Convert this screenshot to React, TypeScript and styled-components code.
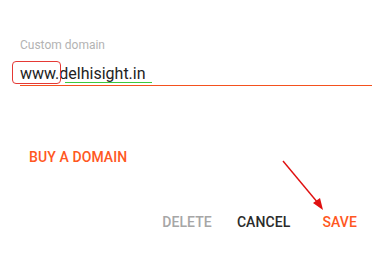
import React from "react";
import styled, { createGlobalStyle } from "styled-components";

const Global = createGlobalStyle`
  html, body { margin: 0; padding: 0; background: #ffffff; }
  body { font-family: Roboto, "Liberation Sans", sans-serif; }
`;

const Page = styled.div`
  position: relative;
  width: 392px;
  height: 255px;
  box-sizing: border-box;
  padding: 38px 20px 0 20px;
  display: flex;
  flex-direction: column;
`;

const Label = styled.div`
  font-size: 12px;
  line-height: 14px;
  color: #b3b3b3;
`;

const InputRow = styled.div`
  margin-top: 11px;
  height: 21px;
  display: flex;
  align-items: flex-end;
  border-bottom: 1px solid #f4511e;
  font-size: 16px;
  line-height: 20px;
  color: #222222;
  padding-bottom: 1px;
`;

const Marked = styled.span`
  position: relative;
  &::after {
    content: "";
    position: absolute;
    left: 6px;
    right: -6px;
    bottom: 1px;
    height: 1.5px;
    background: #3cc93c;
  }
`;

const LinkButton = styled.div<{ $tone: "accent" | "muted" | "dark" }>`
  font-size: 14px;
  font-weight: 500;
  line-height: 16px;
  letter-spacing: 0.1px;
  color: ${(p) =>
    p.$tone === "accent" ? "#ff5722" : p.$tone === "muted" ? "#a6a6a6" : "#2b2b2b"};
`;

const BuyRow = styled.div`
  margin-top: 63px;
  padding-left: 9px;
`;

const Actions = styled.div`
  margin-top: 49px;
  display: flex;
  justify-content: flex-end;
  gap: 25px;
  padding-right: 15px;
`;

const SaveSlot = styled.div`
  margin-left: 7px;
`;

const Box = styled.div`
  position: absolute;
  left: 12px;
  top: 61px;
  width: 49px;
  height: 23px;
  border: 1.3px solid #e53935;
  border-radius: 4px;
  box-sizing: border-box;
`;

const Arrow = styled.svg`
  position: absolute;
  left: 0;
  top: 0;
  pointer-events: none;
`;

export default function App() {
  return (
    <>
      <Global />
      <Page>
        <Label>Custom domain</Label>
        <InputRow>
          <span>www.</span>
          <Marked>delhisight.in</Marked>
        </InputRow>
        <BuyRow>
          <LinkButton $tone="accent">BUY A DOMAIN</LinkButton>
        </BuyRow>
        <Actions>
          <LinkButton $tone="muted">DELETE</LinkButton>
          <LinkButton $tone="dark">CANCEL</LinkButton>
          <SaveSlot>
            <LinkButton $tone="accent">SAVE</LinkButton>
          </SaveSlot>
        </Actions>
        <Box />
        <Arrow width="392" height="255" viewBox="0 0 392 255">
          <line x1="283" y1="161" x2="318" y2="203" stroke="#e01010" strokeWidth="1.4" />
          <polygon points="323,210 313,203 320,198" fill="#e01010" />
        </Arrow>
      </Page>
    </>
  );
}
